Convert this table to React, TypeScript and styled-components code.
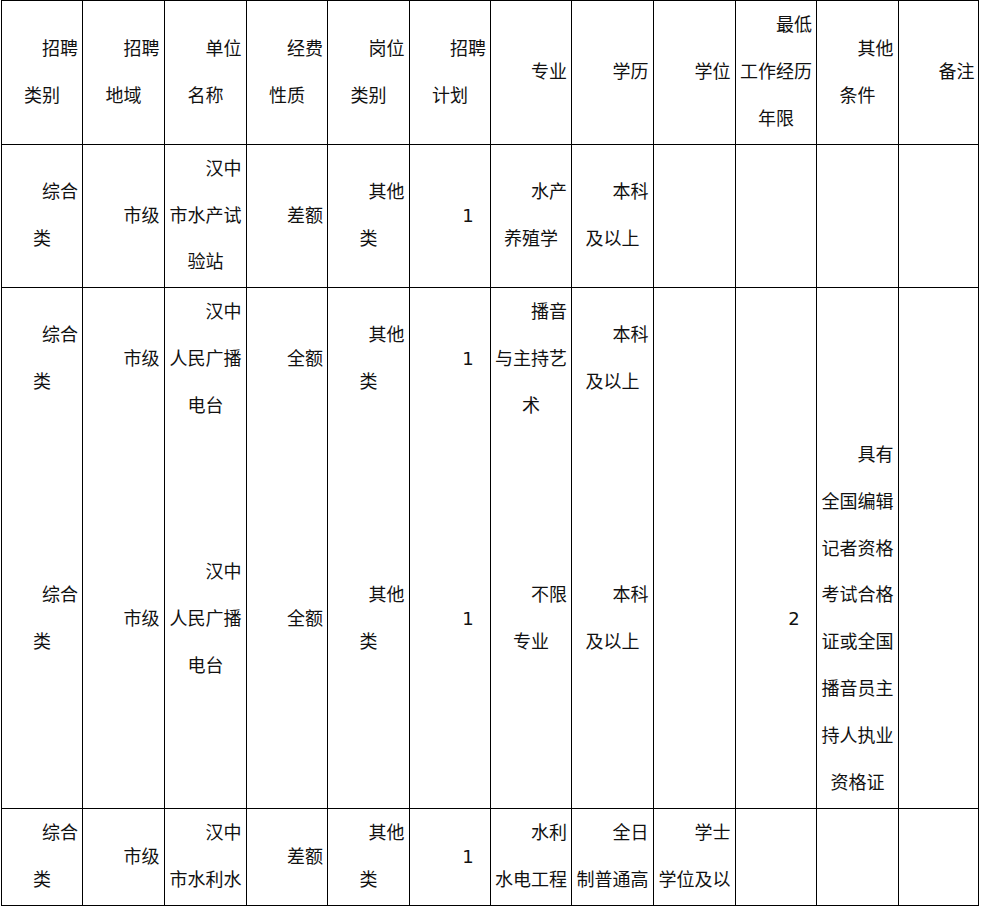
import React from 'react'
import styled, { createGlobalStyle } from 'styled-components'

const GlobalStyle = createGlobalStyle`
  html, body {
    margin: 0;
    padding: 0;
    background: #fff;
  }
  body {
    font-family: "DejaVu Sans", "Noto Sans CJK SC", sans-serif;
    color: #111;
  }
`

const Sheet = styled.table`
  width: 977px;
  margin-left: 1px;
  table-layout: fixed;
  border-collapse: collapse;
  border: 1px solid #000;
`

const Col = styled.col<{ $w: number }>`
  width: ${({ $w }) => $w}px;
`

const Row = styled.tr<{ $h: number }>`
  height: ${({ $h }) => $h}px;
`

const cellRules = `
  border: 1px solid #000;
  padding: 0 3px;
  font-size: 18px;
  font-weight: normal;
  line-height: 46.8px;
  text-align: center;
  text-indent: 2em;
  vertical-align: middle;
  word-break: break-all;
  overflow: hidden;
`

const HeadCell = styled.th`
  ${cellRules}
`

const Cell = styled.td<{ $open?: boolean }>`
  ${cellRules}
  ${({ $open }) => ($open ? 'border-bottom: hidden;' : '')}
`

const WIDTHS = [81, 82, 82, 81, 82, 81, 81, 82, 82, 81, 82, 80]

const HEADERS = [
  '招聘类别',
  '招聘地域',
  '单位名称',
  '经费性质',
  '岗位类别',
  '招聘计划',
  '专业',
  '学历',
  '学位',
  '最低工作经历年限',
  '其他条件',
  '备注'
]

type Post = { height: number; open?: boolean; cells: string[] }

const POSTS: Post[] = [
  {
    height: 143,
    cells: ['综合类', '市级', '汉中市水产试验站', '差额', '其他类', '1', '水产养殖学', '本科及以上', '', '', '', '']
  },
  {
    height: 143,
    open: true,
    cells: ['综合类', '市级', '汉中人民广播电台', '全额', '其他类', '1', '播音与主持艺术', '本科及以上', '', '', '', '']
  },
  {
    height: 378,
    cells: [
      '综合类',
      '市级',
      '汉中人民广播电台',
      '全额',
      '其他类',
      '1',
      '不限专业',
      '本科及以上',
      '',
      '2',
      '具有全国编辑记者资格考试合格证或全国播音员主持人执业资格证',
      ''
    ]
  },
  {
    height: 97,
    cells: ['综合类', '市级', '汉中市水利水', '差额', '其他类', '1', '水利水电工程', '全日制普通高', '学士学位及以', '', '', '']
  }
]

export default function App() {
  return (
    <>
      <GlobalStyle />
      <Sheet>
        <colgroup>
          {WIDTHS.map((w, i) => (
            <Col key={i} $w={w} />
          ))}
        </colgroup>
        <thead>
          <Row $h={144}>
            {HEADERS.map((h) => (
              <HeadCell key={h}>{h}</HeadCell>
            ))}
          </Row>
        </thead>
        <tbody>
          {POSTS.map((post, i) => (
            <Row key={i} $h={post.height}>
              {post.cells.map((text, j) => (
                <Cell key={j} $open={post.open}>
                  {text}
                </Cell>
              ))}
            </Row>
          ))}
        </tbody>
      </Sheet>
    </>
  )
}
